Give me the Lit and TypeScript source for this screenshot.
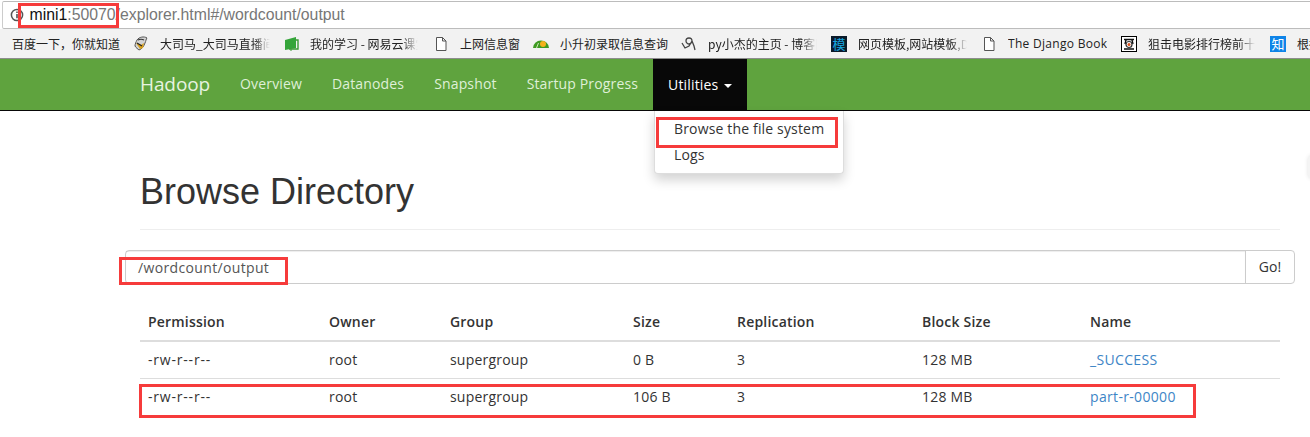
import { LitElement, html, css, svg } from "lit";
import { customElement } from "lit/decorators.js";

const doc = svg`<path d="M3.5 1.5h6l3.5 3.5v9.5h-9.5z M9.5 1.5v3.5h3.5" fill="#fff" stroke="#555" stroke-width="1"/>`;
const icons: Record<string, unknown> = {
  bird: svg`<path d="M4 4c2-3 7-4 10-2-1 1-1 3-2 5-1 3-3 6-6 7-1-1-3-2-4-4 0-2 1-4 2-6z" fill="#d4d4d4" stroke="#555"/><path d="M3 7l5 2 3-2-1 5-3 1z" fill="#d9a21f"/><path d="M5 4c2-1 4-1 6 0" fill="none" stroke="#333" stroke-width="1.2"/><path d="M4 7l5 3" stroke="#222" stroke-width="1.2"/>`,
  book: svg`<path d="M2 4l11-3v11l-11 2z" fill="#35a53a"/><path d="M13 4h2v9H6" fill="none" stroke="#3a9a35" stroke-width="1.4"/><path d="M8 13v2" stroke="#3a9a35"/>`,
  doc,
  dome: svg`<path d="M0 12a8 7.5 0 0 1 16 0z" fill="#3f9a22"/><circle cx="10" cy="8" r="3" fill="#f5b21c"/><path d="M3.5 12l2-5" stroke="#cde8b5"/>`,
  py: svg`<path d="M1 7l3 5 4-2 3-5c0-2-1-3-3-3S5 3 5 5s2 3 3 3 3-1 3-3l2 5 1 4" fill="none" stroke="#444" stroke-width="1.3"/>`,
  mo: svg`<rect width="16" height="16" fill="#0a1a2a"/><text x="8" y="13" font-size="13" text-anchor="middle" fill="#18a8e0" font-family="Noto Sans CJK SC">模</text>`,
  ring: svg`<rect x=".5" y=".5" width="15" height="15" fill="#fff" stroke="#000"/><path d="M3 3.5h10M5 4l-1 4M11 4l1 4M3 13h10" stroke="#111" stroke-width="1.4"/><circle cx="8" cy="8.5" r="3" fill="#fff" stroke="#333" stroke-width="1.2"/><circle cx="8" cy="8.5" r="1.5" fill="#e0531e"/>`,
  zhi: svg`<rect width="16" height="16" fill="#0e84e8"/><text x="8" y="13" font-size="13" text-anchor="middle" fill="#fff" font-family="Noto Sans CJK SC">知</text>`,
};

const bookmarks: { icon?: string; text: string; w: number; gap: number; fade?: boolean; wide?: boolean }[] = [
  { text: "百度一下，你就知道", w: 108, gap: 13 },
  { icon: "bird", text: "大司马_大司马直播间", w: 110, gap: 13, fade: true },
  { icon: "book", text: "我的学习 - 网易云课堂", w: 108, gap: 15, fade: true },
  { icon: "doc", text: "上网信息窗", w: 60, gap: 13 },
  { icon: "dome", text: "小升初录取信息查询", w: 108, gap: 13 },
  { icon: "py", text: "py小杰的主页 - 博客园", w: 109, gap: 14, fade: true },
  { icon: "mo", text: "网页模板,网站模板,DIV", w: 109, gap: 14, fade: true },
  { icon: "doc", text: "The Django Book", w: 99, gap: 14, wide: true },
  { icon: "ring", text: "狙击电影排行榜前十名", w: 107, gap: 15, fade: true },
  { icon: "zhi", text: "根据", w: 30, gap: 0 },
];

const columns = ["Permission", "Owner", "Group", "Size", "Replication", "Block Size", "Name"];
const rows = [
  ["-rw-r--r--", "root", "supergroup", "0 B", "3", "128 MB", "_SUCCESS"],
  ["-rw-r--r--", "root", "supergroup", "106 B", "3", "128 MB", "part-r-00000"],
];
const nav = ["Overview", "Datanodes", "Snapshot", "Startup Progress"];

@customElement("app-root")
export class AppRoot extends LitElement {
  static styles = css`
    :host {
      display: block;
      position: relative;
      width: 1310px;
      height: 437px;
      overflow: hidden;
      background: #fff;
      font-family: "Open Sans", "Noto Sans CJK SC", sans-serif;
      color: #333;
    }
    .address {
      height: 28px;
      box-sizing: border-box;
      margin: 1px 0 0 2px;
      border: 1px solid #bcbcbc;
      border-right: 0;
      border-left-color: #ccc;
      border-radius: 2px 0 0 2px;
      display: flex;
      align-items: center;
      padding-left: 7px;
      gap: 5.5px;
      font-family: "Liberation Sans", sans-serif;
      font-size: 15.8px;
      color: #777;
    }
    .address svg { flex: none; }
    .address b { font-weight: 400; color: #111; }
    .bookmarks {
      height: 30px;
      box-sizing: border-box;
      background: #f2f2f2;
      display: flex;
      align-items: center;
      padding-left: 12px;
      font-size: 12px;
      color: #222;
      white-space: nowrap;
      border-bottom: 1px solid #8d8d8d;
    }
    .bm { display: flex; align-items: center; gap: 11px; flex: none; }
    .bm svg { flex: none; }
    .bm span {
      display: block;
      overflow: hidden;
      font-family: "Noto Sans CJK SC", "Open Sans", sans-serif;
    }
    .bm span.fade {
      -webkit-mask-image: linear-gradient(90deg, #000 85%, transparent);
      mask-image: linear-gradient(90deg, #000 85%, transparent);
    }
    .bm span.wide { font-family: "Open Sans", sans-serif; letter-spacing: .3px; }
    .navbar {
      height: 52px;
      box-sizing: border-box;
      background: #5fa33e;
      border-bottom: 1px solid #080808;
      display: flex;
      padding-left: 140px;
      font-size: 14px;
      color: #dff0d8;
    }
    .brand { font-size: 19px; color: #e8f3e1; line-height: 50px; margin-right: 15px; letter-spacing: -.1px; }
    .navbar a { display: block; padding: 0 15px; line-height: 50px; letter-spacing: .15px; }
    .navbar a.active {
      background: #080808;
      color: #fff;
      display: flex;
      align-items: center;
      gap: 6px;
    }
    .caret { width: 0; height: 0; margin-top: 2px; border-top: 4px solid #fff; border-left: 4px solid transparent; border-right: 4px solid transparent; }
    .menu {
      position: absolute;
      left: 654px;
      top: 111px;
      width: 190px;
      height: 63px;
      box-sizing: border-box;
      background: #fff;
      border: 1px solid #ddd;
      border-top: 0;
      border-radius: 0 0 4px 4px;
      box-shadow: 0 6px 12px rgba(0, 0, 0, .175);
      padding-top: 5px;
      font-size: 14px;
      letter-spacing: .16px;
      color: #333;
    }
    .menu div { padding: 0 19px; line-height: 26px; white-space: nowrap; }
    .content { padding: 0 15px 0 125px; }
    .page-header {
      margin: 0 15px;
      padding: 59px 0 16px;
      border-bottom: 1px solid #eee;
    }
    h1 { margin: 0; font-family: "Liberation Sans", sans-serif; font-weight: 400; font-size: 36px; line-height: 43px; color: #333; }
    .group {
      margin-top: 20px;
      height: 34px;
      box-sizing: border-box;
      display: flex;
      border: 1px solid #ccc;
      border-radius: 4px;
      font-size: 14px;
      line-height: 32px;
    }
    .path {
      flex: 1;
      padding: 1px 0 0 12px;
      letter-spacing: .35px;
      color: #555;
      box-shadow: inset 0 1px 1px rgba(0, 0, 0, .075);
    }
    .go { width: 49px; box-sizing: border-box; border-left: 1px solid #ccc; text-align: center; }
    table {
      margin: 20px 15px 0;
      width: 1140px;
      border-collapse: collapse;
      table-layout: fixed;
      font-size: 14px;
      line-height: 20px;
      letter-spacing: .2px;
    }
    th { text-align: left; font-weight: 600; padding: 8px; border-bottom: 2px solid #ddd; }
    td { padding: 8px; border-top: 1px solid #ddd; }
    td:first-child { letter-spacing: .8px; }
    th:nth-child(1) { width: 165px; }
    th:nth-child(2) { width: 105px; }
    th:nth-child(3) { width: 167px; }
    th:nth-child(4) { width: 88px; }
    th:nth-child(5) { width: 169px; }
    th:nth-child(6) { width: 152px; }
    td a { color: #3d85c6; letter-spacing: .33px; }
    .mark { position: absolute; border: 3px solid #f63b3b; box-sizing: border-box; pointer-events: none; }
    .m1 { left: 18px; top: 3px; width: 101px; height: 25px; }
    .m2 { left: 656px; top: 117px; width: 182px; height: 31px; }
    .m3 { left: 119px; top: 257px; width: 169px; height: 28px; }
    .m4 { left: 139px; top: 384px; width: 1057px; height: 34px; }
    .edge {
      position: absolute;
      right: -8px;
      top: 155px;
      width: 10px;
      height: 24px;
      border-radius: 5px;
      background: #f4f4f4;
      box-shadow: 0 0 4px rgba(0, 0, 0, .12);
    }
  `;

  render() {
    return html`
      <div class="address">
        <svg width="14" height="14" viewBox="0 0 14 14">
          <circle cx="7" cy="7" r="5.6" fill="none" stroke="#555" stroke-width="1.5"/>
          <path d="M7 6v4.2M7 3.6v1.4" stroke="#555" stroke-width="1.6"/>
        </svg>
        <div><b>mini1</b>:50070/explorer.html#/wordcount/output</div>
      </div>
      <div class="bookmarks">
        ${bookmarks.map(
          (b) => html`<div class="bm" style="margin-right:${b.gap}px">
            ${b.icon ? html`<svg width="16" height="16" viewBox="0 0 16 16">${icons[b.icon]}</svg>` : ""}
            <span class="${b.fade ? "fade" : ""} ${b.wide ? "wide" : ""}" style="width:${b.w}px">${b.text}</span>
          </div>`
        )}
      </div>
      <div class="navbar">
        <div class="brand">Hadoop</div>
        ${nav.map((n) => html`<a>${n}</a>`)}
        <a class="active">Utilities<i class="caret"></i></a>
      </div>
      <div class="menu">
        <div>Browse the file system</div>
        <div>Logs</div>
      </div>
      <div class="content">
        <div class="page-header"><h1>Browse Directory</h1></div>
        <div class="group">
          <div class="path">/wordcount/output</div>
          <div class="go">Go!</div>
        </div>
        <table>
          <thead><tr>${columns.map((c) => html`<th>${c}</th>`)}</tr></thead>
          <tbody>
            ${rows.map(
              (r) => html`<tr>${r.map((v, i) => html`<td>${i === 6 ? html`<a>${v}</a>` : v}</td>`)}</tr>`
            )}
          </tbody>
        </table>
      </div>
      <div class="mark m1"></div>
      <div class="mark m2"></div>
      <div class="mark m3"></div>
      <div class="mark m4"></div>
      <div class="edge"></div>
    `;
  }
}
